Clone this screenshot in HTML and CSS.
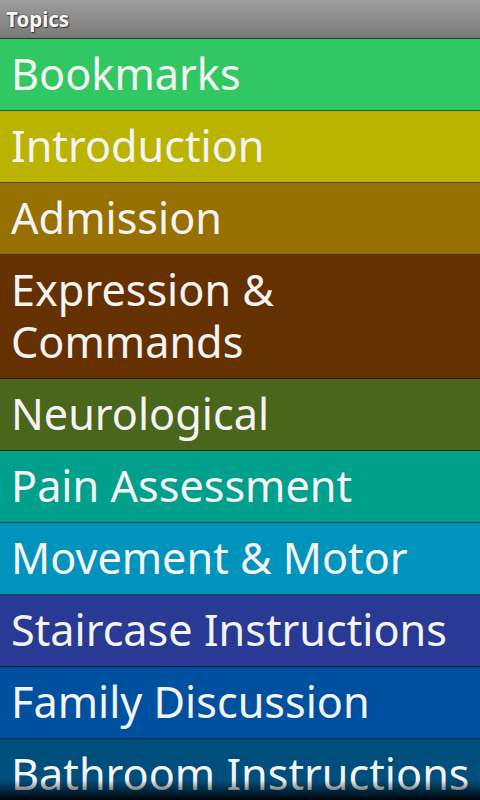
FILE: index.html
```
<!DOCTYPE html>
<html>
<head>
<meta charset="utf-8">
<link rel="stylesheet" href="styles.css">
</head>
<body>
<div class="screen">
  <div class="titlebar"><span class="title">Topics</span></div>
  <ul class="topics">
    <li class="topic c1">Bookmarks</li>
    <li class="topic c2">Introduction</li>
    <li class="topic c3">Admission</li>
    <li class="topic c4">Expression &amp;<br>Commands</li>
    <li class="topic c5">Neurological</li>
    <li class="topic c6">Pain Assessment</li>
    <li class="topic c7">Movement &amp; Motor</li>
    <li class="topic c8">Staircase Instructions</li>
    <li class="topic c9">Family Discussion</li>
    <li class="topic c10">Bathroom Instructions</li>
  </ul>
  <div class="fade"></div>
</div>
</body>
</html>
```
FILE: styles.css
```
html, body {
  margin: 0;
  padding: 0;
  background: #000;
}
.screen {
  position: relative;
  width: 480px;
  height: 800px;
  overflow: hidden;
  font-family: "Noto Sans", "Open Sans", sans-serif;
}
.titlebar {
  height: 38px;
  background: linear-gradient(#9c9c9c, #8a8a8a 60%, #777);
  border-bottom: 1px solid #1f3a25;
  display: flex;
  align-items: center;
  padding-left: 6px;
}
.title {
  color: #f6f6f6;
  font-weight: bold;
  font-size: 20.5px;
  text-shadow: 0 0 2px #444, 1px 1px 1px #333;
}
.topics {
  list-style: none;
  margin: 0;
  padding: 0;
}
.topic {
  color: #f4f4f4;
  font-size: 43.2px;
  line-height: 52px;
  padding: 9px 11px 10px 11px;
  border-bottom: 1px solid rgba(0, 0, 0, 0.55);
  white-space: nowrap;
}
.c1 { background: #31c864; }
.c2 { background: #bab300; }
.c3 { background: #967000; }
.c4 { background: #663100; }
.c5 { background: #4a661a; }
.c6 { background: #00a08c; }
.c7 { background: #0094bc; }
.c8 { background: #283a94; }
.c9 { background: #0050a0; }
.c10 { background: #004e7c; }
.fade {
  position: absolute;
  left: 0;
  right: 0;
  bottom: 0;
  height: 20px;
  background: linear-gradient(rgba(0,0,0,0), rgba(0,0,0,0.95));
}
```
